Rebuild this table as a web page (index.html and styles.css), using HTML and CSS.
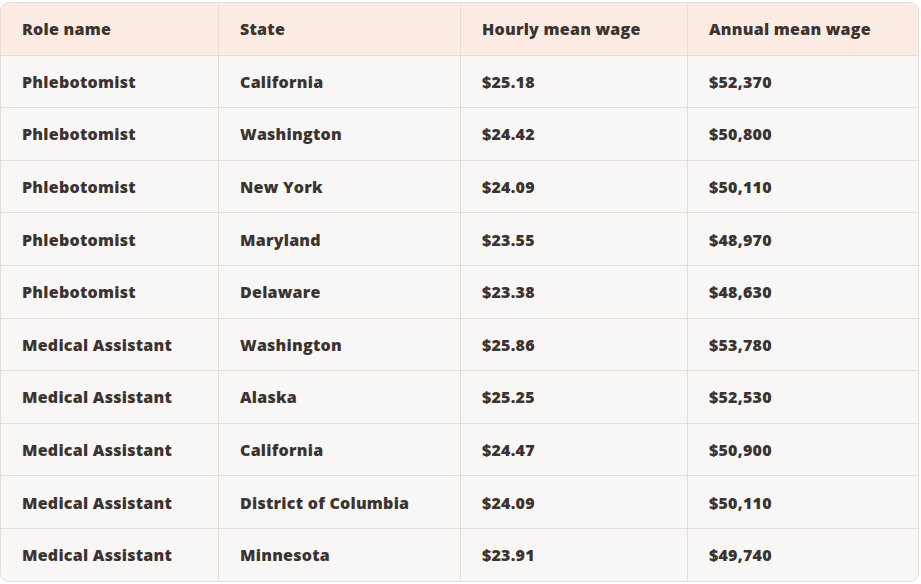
FILE: index.html
```html
<!DOCTYPE html>
<html>
<head>
<meta charset="utf-8">
<link rel="stylesheet" href="styles.css">
</head>
<body>
<div class="wrap">
<table class="wages">
<thead>
<tr><th>Role name</th><th>State</th><th>Hourly mean wage</th><th>Annual mean wage</th></tr>
</thead>
<tbody>
<tr><td>Phlebotomist</td><td>California</td><td>$25.18</td><td>$52,370</td></tr>
<tr><td>Phlebotomist</td><td>Washington</td><td>$24.42</td><td>$50,800</td></tr>
<tr><td>Phlebotomist</td><td>New York</td><td>$24.09</td><td>$50,110</td></tr>
<tr><td>Phlebotomist</td><td>Maryland</td><td>$23.55</td><td>$48,970</td></tr>
<tr><td>Phlebotomist</td><td>Delaware</td><td>$23.38</td><td>$48,630</td></tr>
<tr><td>Medical Assistant</td><td>Washington</td><td>$25.86</td><td>$53,780</td></tr>
<tr><td>Medical Assistant</td><td>Alaska</td><td>$25.25</td><td>$52,530</td></tr>
<tr><td>Medical Assistant</td><td>California</td><td>$24.47</td><td>$50,900</td></tr>
<tr><td>Medical Assistant</td><td>District of Columbia</td><td>$24.09</td><td>$50,110</td></tr>
<tr><td>Medical Assistant</td><td>Minnesota</td><td>$23.91</td><td>$49,740</td></tr>
</tbody>
</table>
</div>
</body>
</html>
```
FILE: styles.css
```css
html, body {
  margin: 0;
  padding: 0;
  background: #ffffff;
}
.wrap {
  padding: 2px 2px 0 0;
}
.wages {
  width: 919px;
  border-collapse: separate;
  border-spacing: 0;
  border: 1px solid #e6ddd7;
  border-radius: 9px;
  overflow: hidden;
  font-family: "Open Sans", sans-serif;
  font-weight: 800;
  font-size: 16px;
  letter-spacing: 0.25px;
  color: #3a3330;
  background: #f8f7f5;
  table-layout: fixed;
}
.wages th, .wages td {
  text-align: left;
  padding: 1px 0 0 21px;
  height: 50.6px;
  line-height: 20px;
  border-right: 1px solid #e6ddd7;
  border-bottom: 1px solid #e6ddd7;
}
.wages th {
  background: #fcebe2;
  font-weight: 800;
}
.wages th:last-child, .wages td:last-child {
  border-right: none;
}
.wages tbody tr:last-child td {
  border-bottom: none;
}
.wages th:nth-child(1) { width: 196px; }
.wages th:nth-child(2) { width: 220px; }
.wages th:nth-child(3) { width: 205px; }
```
